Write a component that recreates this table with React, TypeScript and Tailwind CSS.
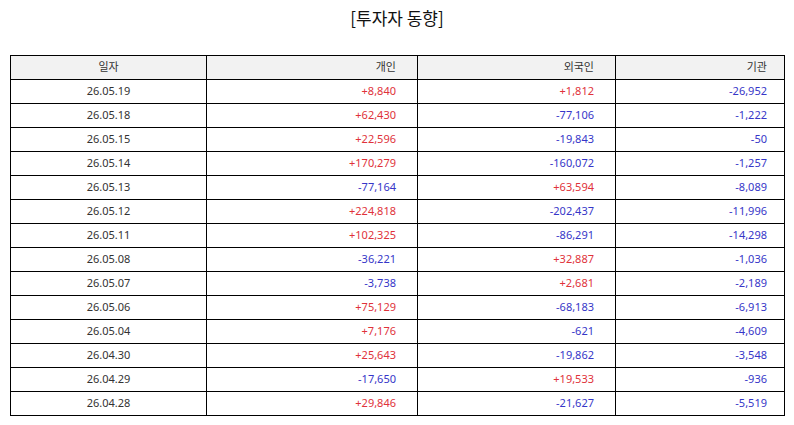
import React from 'react';

type Row = { date: string; personal: string; foreign: string; inst: string };

const rows: Row[] = [
  { date: '26.05.19', personal: '+8,840', foreign: '+1,812', inst: '-26,952' },
  { date: '26.05.18', personal: '+62,430', foreign: '-77,106', inst: '-1,222' },
  { date: '26.05.15', personal: '+22,596', foreign: '-19,843', inst: '-50' },
  { date: '26.05.14', personal: '+170,279', foreign: '-160,072', inst: '-1,257' },
  { date: '26.05.13', personal: '-77,164', foreign: '+63,594', inst: '-8,089' },
  { date: '26.05.12', personal: '+224,818', foreign: '-202,437', inst: '-11,996' },
  { date: '26.05.11', personal: '+102,325', foreign: '-86,291', inst: '-14,298' },
  { date: '26.05.08', personal: '-36,221', foreign: '+32,887', inst: '-1,036' },
  { date: '26.05.07', personal: '-3,738', foreign: '+2,681', inst: '-2,189' },
  { date: '26.05.06', personal: '+75,129', foreign: '-68,183', inst: '-6,913' },
  { date: '26.05.04', personal: '+7,176', foreign: '-621', inst: '-4,609' },
  { date: '26.04.30', personal: '+25,643', foreign: '-19,862', inst: '-3,548' },
  { date: '26.04.29', personal: '-17,650', foreign: '+19,533', inst: '-936' },
  { date: '26.04.28', personal: '+29,846', foreign: '-21,627', inst: '-5,519' },
];

const tone = (v: string) => (v.startsWith('+') ? 'text-[#e0323a]' : 'text-[#3636c8]');

const App: React.FC = () => {
  return (
    <div
      className="w-[794px] h-[425px] bg-white px-[10px] pt-[6px]"
      style={{ fontFamily: '"Noto Sans", "Noto Sans CJK KR", sans-serif' }}
    >
      {/* Title */}
      <h1
        className="text-center text-[17px] leading-[24px] text-[#111]"
        style={{ fontFamily: '"Noto Sans CJK KR", sans-serif' }}
      >
        [투자자 동향]
      </h1>

      {/* Table */}
      <table className="mt-[25px] w-[774px] table-fixed border-collapse text-[11px] text-[#333]">
        <colgroup>
          <col className="w-[196px]" />
          <col className="w-[211px]" />
          <col className="w-[198px]" />
          <col className="w-[169px]" />
        </colgroup>
        <thead>
          <tr className="bg-[#f2f2f2] h-[24px]">
            <th className="border border-black font-normal text-center p-0">일자</th>
            <th className="border border-black font-normal text-right pr-[21px] p-0">개인</th>
            <th className="border border-black font-normal text-right pr-[21px] p-0">외국인</th>
            <th className="border border-black font-normal text-right pr-[17px] p-0">기관</th>
          </tr>
        </thead>
        <tbody>
          {rows.map((r) => (
            <tr key={r.date} className="h-[24px]">
              <td className="border border-black text-center p-0">{r.date}</td>
              <td className={`border border-black text-right p-0 pr-[21px] ${tone(r.personal)}`}>{r.personal}</td>
              <td className={`border border-black text-right p-0 pr-[21px] ${tone(r.foreign)}`}>{r.foreign}</td>
              <td className={`border border-black text-right p-0 pr-[17px] ${tone(r.inst)}`}>{r.inst}</td>
            </tr>
          ))}
        </tbody>
      </table>
    </div>
  );
};

export default App;
